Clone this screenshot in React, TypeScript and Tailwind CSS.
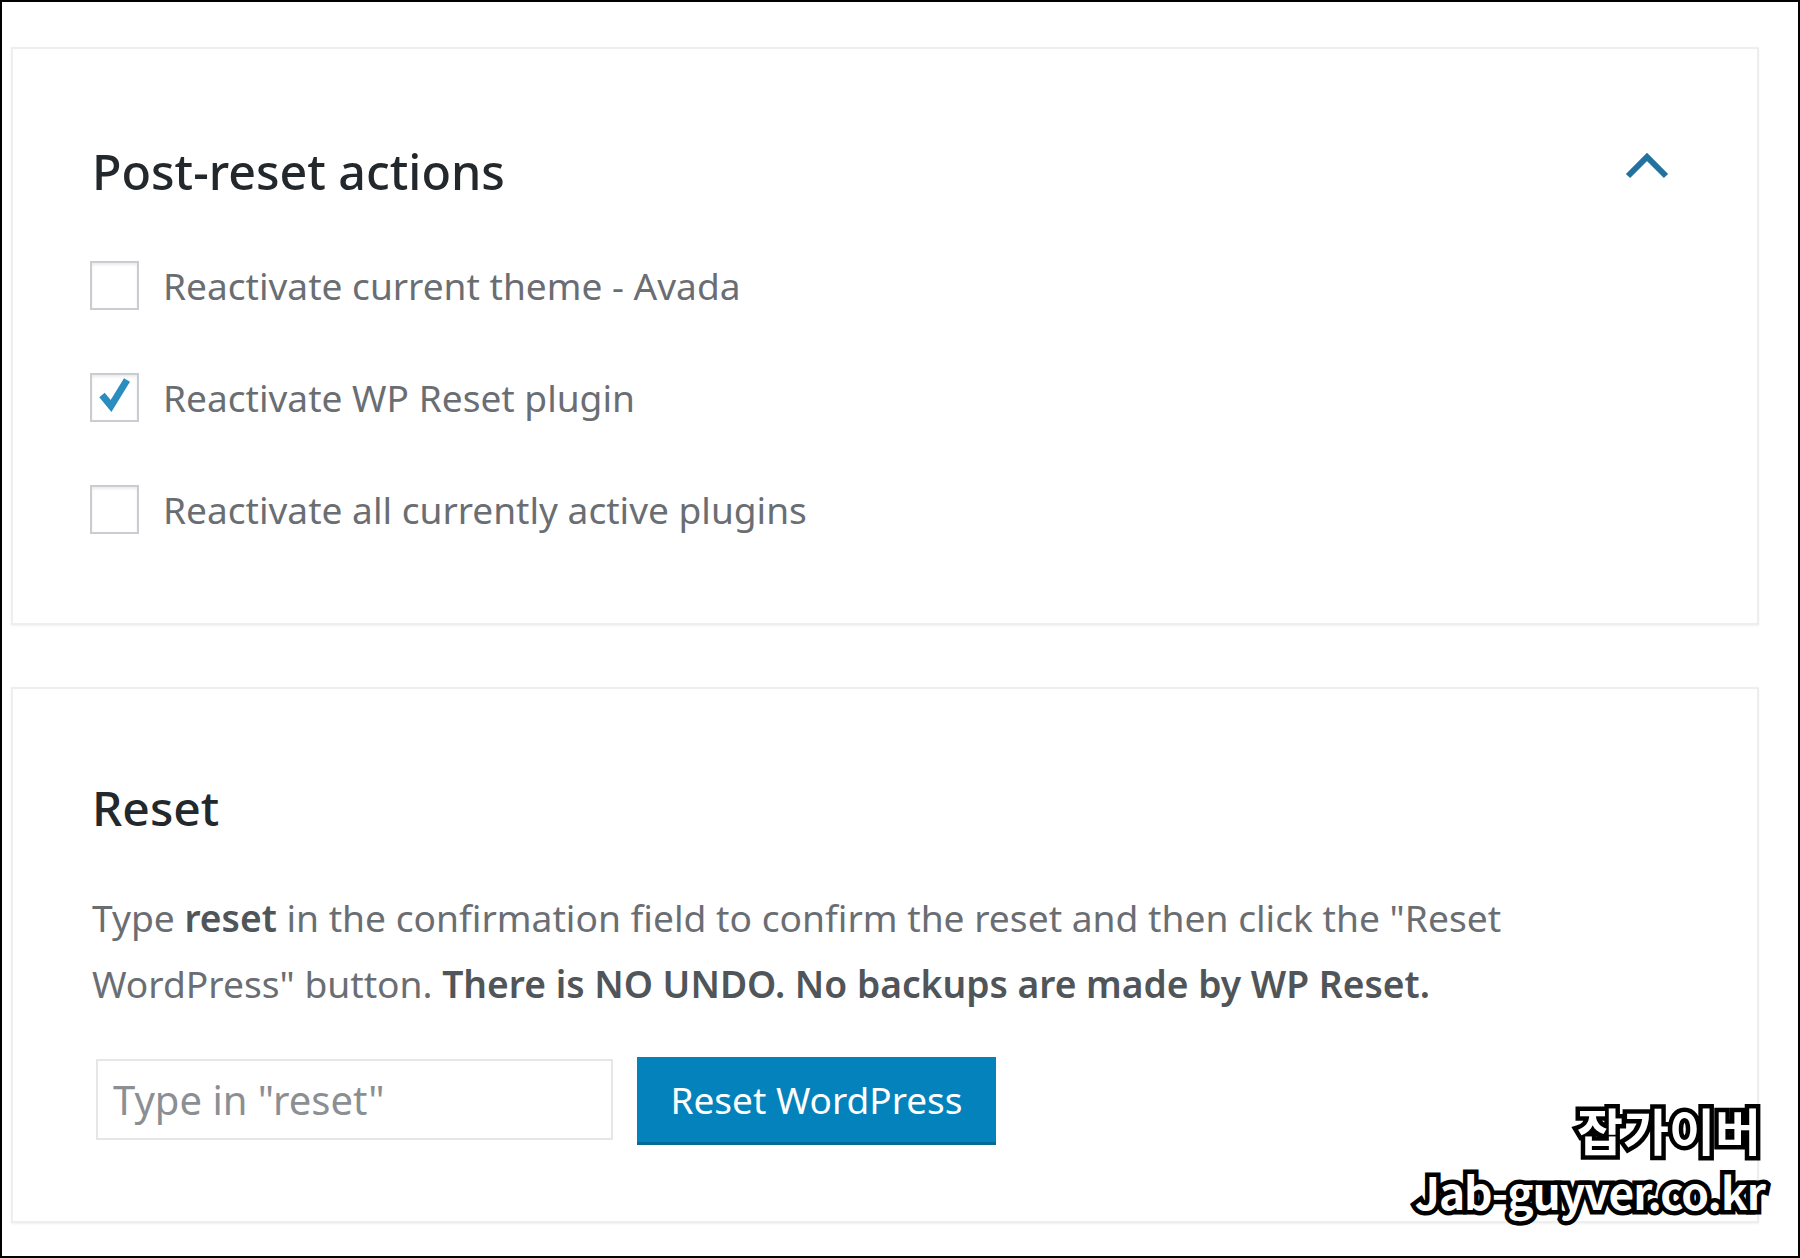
const bodyFont = "font-['Noto_Sans','Open_Sans',sans-serif]";

function Check({ checked, label }: { checked?: boolean; label: string }) {
  return (
    <div className="flex items-center h-[50px]">
      <div className="-ml-[2px] mb-[2px] w-[49px] h-[49px] border-2 border-[#c9ccd0] bg-white shadow-[inset_0_2px_3px_rgba(0,0,0,0.08)] flex items-center justify-center shrink-0">
        {checked && (
          <svg width="36" height="38" viewBox="0 0 36 38" className="-mt-[4px]">
            <path d="M5 19 L14 30 L30 4" fill="none" stroke="#2b8dbf" strokeWidth="7" />
          </svg>
        )}
      </div>
      <span className="ml-[24px] text-[37.1px] leading-none text-[#6a6e73] whitespace-nowrap">{label}</span>
    </div>
  );
}

export default function App() {
  return (
    <div className={`relative w-[1800px] h-[1258px] bg-white border-2 border-black overflow-hidden ${bodyFont}`}>
      <div className="ml-[9px] mt-[45px] w-[1748px] h-[578px] border-2 border-[#eeeeee] shadow-[0_1px_2px_rgba(0,0,0,0.06)] pl-[79px] pr-[88px] pt-[97px]">
        <div className="flex justify-between items-start">
          <h2 className="text-[48.4px] leading-[50px] font-medium text-[#23282d]">Post-reset actions</h2>
          <svg width="44" height="28" viewBox="0 0 44 28" className="mt-[6px]">
            <path d="M3 24 L22 5 L41 24" fill="none" stroke="#23719e" strokeWidth="6" />
          </svg>
        </div>
        <div className="mt-[65px] flex flex-col gap-[62px]">
          <Check label="Reactivate current theme - Avada" />
          <Check checked label="Reactivate WP Reset plugin" />
          <Check label="Reactivate all currently active plugins" />
        </div>
      </div>
      <div className="ml-[9px] mt-[62px] w-[1748px] h-[536px] border-2 border-[#eeeeee] shadow-[0_1px_2px_rgba(0,0,0,0.06)] pl-[79px] pt-[94px]">
        <h2 className="text-[48px] leading-[50px] font-medium text-[#23282d]">Reset</h2>
        <div className="mt-[52px] text-[37.2px] leading-[66px] text-[#6a6e73] whitespace-nowrap">
          <p>
            <span>Type </span>
            <b className="font-semibold text-[#50555a]">reset</b>
            <span> in the confirmation field to confirm the reset and then click the "Reset</span>
          </p>
          <p>
            <span>WordPress" button. </span>
            <b className="font-semibold text-[#50555a]">There is NO UNDO. No backups are made by WP Reset.</b>
          </p>
        </div>
        <div className="mt-[40px] flex items-center">
          <input
            readOnly
            placeholder={'Type in "reset"'}
            className="ml-[4px] mb-[4px] w-[517px] h-[81px] border-2 border-[#e6e6e6] bg-white px-[15px] text-[40px] placeholder:text-[#8b8f94] outline-none"
          />
          <button className="ml-[24px] w-[359px] h-[88px] bg-[#0382bb] border-b-[3px] border-[#066a98] text-white text-[37px]">
            Reset WordPress
          </button>
        </div>
      </div>
      <div className="absolute right-[33px] bottom-[35px] flex flex-col items-end font-['Noto_Sans_CJK_KR',sans-serif] font-bold text-white [-webkit-text-stroke:9px_black] [paint-order:stroke_fill]">
        <span className="text-[50px] leading-[64px] mr-[4px]">잡가이버</span>
        <span className="text-[44.3px] leading-[60px] tracking-[-1px]">Jab-guyver.co.kr</span>
      </div>
    </div>
  );
}
